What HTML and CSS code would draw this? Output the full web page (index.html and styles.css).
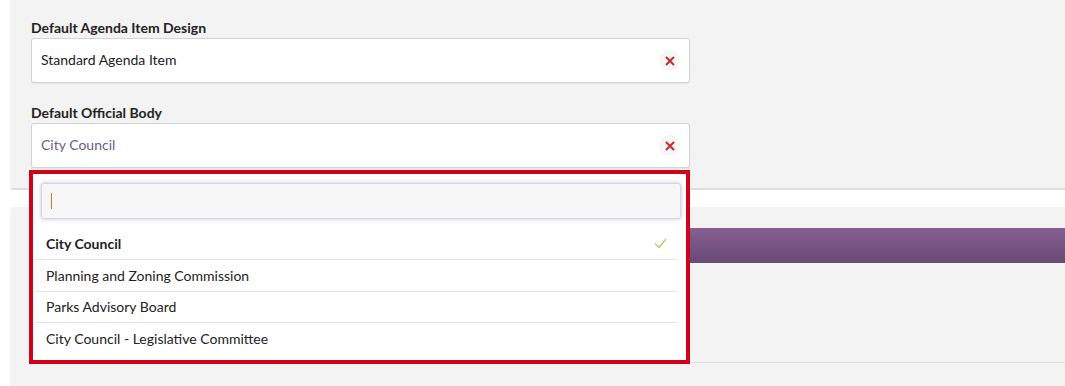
FILE: index.html
```html
<!DOCTYPE html>
<html>
<head>
<meta charset="utf-8">
<link rel="stylesheet" href="styles.css">
</head>
<body>
<div class="page">
  <section class="card card-top">
    <div class="field">
      <label class="label">Default Agenda Item Design</label>
      <div class="select">
        <span class="value">Standard Agenda Item</span>
        <span class="clear"><svg width="10" height="10" viewBox="0 0 10 10"><path d="M1 1 L9 9 M9 1 L1 9" stroke="#c62a2f" stroke-width="2" fill="none"/></svg></span>
      </div>
    </div>
    <div class="field">
      <label class="label">Default Official Body</label>
      <div class="select">
        <span class="value value-selected">City Council</span>
        <span class="clear"><svg width="10" height="10" viewBox="0 0 10 10"><path d="M1 1 L9 9 M9 1 L1 9" stroke="#c62a2f" stroke-width="2" fill="none"/></svg></span>
      </div>
    </div>
  </section>
  <section class="card card-bottom">
    <div class="bar"></div>
    <div class="rule"></div>
  </section>
  <div class="dropdown">
    <div class="search"><span class="caret"></span></div>
    <ul class="options">
      <li class="option option-active">City Council<svg class="check" width="13" height="11" viewBox="0 0 13 11"><path d="M1 5.5 L5 9.5 L12 1" stroke="#a9d66f" stroke-width="1.5" fill="none"/></svg></li>
      <li class="option">Planning and Zoning Commission</li>
      <li class="option">Parks Advisory Board</li>
      <li class="option">City Council - Legislative Committee</li>
    </ul>
  </div>
</div>
</body>
</html>
```

FILE: styles.css
```css
* { box-sizing: border-box; }
html, body { margin: 0; padding: 0; background: #ffffff; }
body {
  font-family: Lato, "Open Sans", "Liberation Sans", sans-serif;
  font-size: 14px;
  color: #222;
  height: 386px;
  overflow: hidden;
}
.page {
  position: relative;
  padding-left: 10px;
}
.card {
  background: #f3f3f3;
}
.card-top {
  height: 190px;
  padding: 19px 0 0 21px;
  border-bottom: 2px solid #dedede;
  border-bottom-left-radius: 4px;
}
.field { width: 659px; margin-bottom: 21px; }
.label {
  display: block;
  font-weight: 700;
  font-size: 14px;
  line-height: 17px;
  color: #222;
  margin-bottom: 2px;
}
.select {
  height: 45px;
  background: #fff;
  border: 1px solid #d3d3d3;
  border-radius: 3px;
  box-shadow: 0 1px 1px rgba(0,0,0,0.06);
  display: flex;
  align-items: center;
  justify-content: space-between;
  padding: 0 9px 0 9px;
}
.value { font-size: 14px; line-height: 17px; color: #222; margin-top: -2px; }
.value-selected { color: #6e5a86; }
.clear {
  width: 21px;
  height: 21px;
  border-radius: 50%;
  background: #f6f6f6;
  display: flex;
  align-items: center;
  justify-content: center;
}
.card-bottom {
  margin-top: 17px;
  height: 190px;
  border-top-left-radius: 4px;
  padding: 21px 0 0 21px;
}
.bar {
  height: 35px;
  background: linear-gradient(#855f92, #684a75);
}
.rule {
  margin-top: 99px;
  height: 1px;
  background: #dcdcdc;
}
.dropdown {
  position: absolute;
  left: 29px;
  top: 170px;
  width: 661px;
  height: 194px;
  background: #fff;
  border: 4px solid #d0021b;
  padding: 9px 5px 0 8px;
}
.search {
  height: 36px;
  background: #f7f7f7;
  border: 1px solid #dcd3e2;
  border-radius: 3px;
  box-shadow: 0 0 4px rgba(110, 80, 140, 0.35);
  padding: 9px 0 0 9px;
}
.caret {
  display: block;
  width: 1px;
  height: 16px;
  background: #c87a3a;
}
.options {
  list-style: none;
  margin: 9px 4px 0 -5px;
  padding: 0;
}
.option {
  height: 32px;
  display: flex;
  align-items: center;
  justify-content: space-between;
  padding: 0 10px 1px 10px;
  border-bottom: 1px solid #e2e2e2;
  font-size: 14px;
  color: #222;
}
.option:nth-child(3) { height: 31px; }
.option:last-child { border-bottom: none; }
.option-active { font-weight: 700; }
.check { margin-right: 0; }
```
